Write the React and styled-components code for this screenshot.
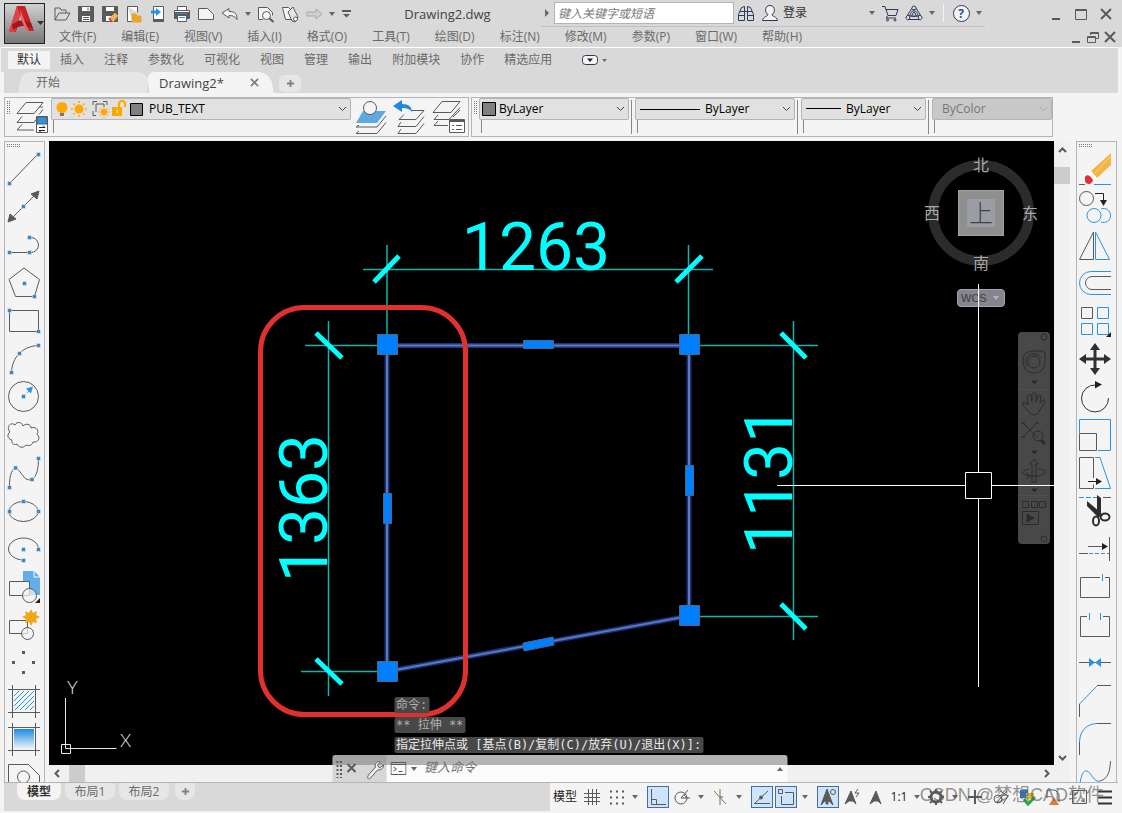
import React, { useState } from 'react';
import styled, { createGlobalStyle, css } from 'styled-components';

const DARK = '#5a5a5a';
const BLUE = '#2b93e3';
const DOT = '#3788c4';

const quickTools = [
  ['打开', <><path d='M2 15V3h5l1 2h5v3' /><path d='M2 15l4-7h11l-4 7z' /></>],
  ['保存', <><path d='M1.500 1.500h15v15h-15z' fill='#5a5a5a' /><path d='M4.500 1.500h9v5h-9zM4.500 10.500h9v6h-9z' fill='#fff' /><path d='M11 2.500v3M6 12.500h6M6 14.500h6' /></>],
  ['另存为', <><path d='M1.500 1.500h15v15h-15z' fill='#5a5a5a' /><path d='M4.500 1.500h9v5h-9zM4.500 10.500h6v6h-6z' fill='#fff' /><path d='M8 14l6-6 3 3-5 6z' fill='#f0b25a' stroke='#e8a040' /><path d='M8 13l3 4' stroke='#d84040' strokeWidth='2' /></>],
  ['从设备打开', <><path d='M2.500 1.500h10v6M2.500 1.500v15h5' fill='#fff' /><path d='M7 17v-8h4l1 2h4v6z' fill='#eba52c' stroke='#eba52c' /></>],
  ['保存到设备', <><path d='M4.500 1.500h10v15h-10z' fill='#fff' /><path d='M4.500 14.500h10v2h-10z' fill='#5a5a5a' /><path d='M2 5.500h5V3l5 4-5 4V8.500H2z' fill={BLUE} stroke='none' /></>],
  ['打印', <><path d='M4.500 5V1.500h9V5M1.500 5.500h15v8h-15z' fill='#fff' /><path d='M1.500 7.500h15v5h-15z' fill='#5a5a5a' /><path d='M4.500 10.500h9v6h-9z' fill='#fff' /><path d='M6 12.500h6M4 8.500h10' stroke={BLUE} /></>],
  ['新建', <path d='M1.500 3.500h9l6 6v5h-15z' fill='#f4f4f4' />],
  ['放弃', <path d='M1 8l7-4.500v3c6 0 8 2 8 8-2-3-4-4-8-4v2.500z' fill='#f4f4f4' />],
  ['', null],
  ['预览', <><path d='M6 14.500H1.500v-12h9l5 5v3' fill='#f4f4f4' /><circle cx='9.500' cy='10.500' r='4' fill='#f4f4f4' /><path d='M12.500 13.500l4 3.500' strokeWidth='2' /></>],
  ['发布', <><path d='M1.500 2.500h6l4 4v8h-7z' fill='#f4f4f4' /><path d='M7 7l5-5 5 10-3 5-3-1z' fill='#e4e4e4' /><circle cx='14.500' cy='14' r='2' fill='#fff' /></>],
  ['重做', <path d='M17 9l-6-5v3H2v4h9v3z' fill='#d0d0d0' stroke='#a8a8a8' />],
  ['', null],
];

const menus = ['文件(F)', '编辑(E)', '视图(V)', '插入(I)', '格式(O)', '工具(T)', '绘图(D)', '标注(N)', '修改(M)', '参数(P)', '窗口(W)', '帮助(H)'];
const ribbonTabs = ['默认', '插入', '注释', '参数化', '可视化', '视图', '管理', '输出', '附加模块', '协作', '精选应用'];

const dots = (...points) => points.map(([x, y]) => (
  <rect key={`${x}-${y}`} x={x - 2} y={y - 2} width='4' height='4' fill={DOT} stroke='#f4f4f4' strokeWidth='.500' />
));

const drawTools = [
  ['直线', <><path d='M5 33L33 4' />{dots([4.5, 33.5], [33.5, 4.5])}</>],
  ['构造线', <><path d='M5 32L32 5' /><path d='M3 34l2-8 6 5zM34 3l-2 8-6-5z' fill={DARK} />{dots([18.5, 18.5])}</>],
  ['多段线', <><path d='M5 26.500h19M24 11.500h2a7.500 7.500 0 0 1 0 15h-2' />{dots([4.5, 26.5], [24.5, 26.5], [24.5, 11.5])}</>],
  ['多边形', <><path d='M19 4l15.500 11.500L29.500 32.500h-19L4 15.500z' />{dots([19.5, 19.5], [29.5, 32.5])}</>],
  ['矩形', <><path d='M4.500 8.500h29v21h-29z' />{dots([4.5, 8.5], [33.5, 29.5])}</>],
  ['圆弧', <><path d='M6.500 32.500C7 17 18 6 33.500 5.500' />{dots([6.5, 32.5], [14.5, 13.5], [33.5, 5.5])}</>],
  ['圆', <><circle cx='18.500' cy='18.500' r='15' /><path d='M18 19l8-8' stroke={BLUE} strokeDasharray='4 2' /><path d='M28 8.500l-2 7-5-5z' fill={BLUE} stroke='none' />{dots([18.5, 18.5])}</>],
  ['修订云线', <path d='M5 16c-4-4 0-11 5-7 2-4 7-3 8 1 3-3 8-2 8 2 4-2 9 2 6 6 4 4 1 9-4 8-1 4-5 4-7 3-3 4-8 2-9-1-4 2-6-2-5-4-5-1-5-6-2-8z' />],
  ['样条曲线', <><path d='M4.500 33.500C4 20 8 14 10.500 14.500c6 1 8 14 16 11C32 23 33.500 14 33.500 4' />{dots([4.5, 33.5], [10.5, 14], [27, 25.5], [33.5, 4.5])}</>],
  ['椭圆', <><ellipse cx='18.500' cy='19.500' rx='14.500' ry='10' />{dots([4.5, 19.5], [33.5, 19.5], [18.5, 9.5])}</>],
  ['椭圆弧', <><path d='M33.500 19c0-6-7-11-15-11s-15 5-15 11 7 11 15 11' />{dots([18.5, 19.5], [33.5, 19.5], [18.5, 30.5])}</>],
  ['插入块', <><path d='M18 3h11l6 6v18H18z' fill='#63aee8' stroke='none' /><path d='M29 3v6h6' stroke='#fff' /><path d='M4.500 13.500h20v14h-20z' fill='#f4f4f4' /><circle cx='24.500' cy='27.500' r='7' fill='#f4f4f4' fillOpacity='.7' /><path d='M35 30v5h-5z' fill='#222' stroke='none' /></>],
  ['创建块', <><path d='M4.500 14.500h18v13h-18z' /><circle cx='22.500' cy='27.500' r='6' fill='#f4f4f4' fillOpacity='.7' /><path d='M26 3l2 4 4-2-1 4 4 2-4 2 1 4-4-1-2 4-2-4-4 1 1-4-4-2 4-2-1-4 4 2z' fill='#f2a516' stroke='none' /></>],
  ['点', <path d='M17 7h3v3h-3zM7 17h3v3H7zM27 17h3v3h-3zM17 27h3v3h-3z' fill={DARK} stroke='none' />],
  ['图案填充', <><path d='M7.500 3v33M30.500 3v33M3 7.500h32M3 30.500h32' /><path d='M9 14l5-5M9 19L19 9M9 24L24 9M10 28L29 9M15 28l14-14M20 28l9-9M25 28l4-4' stroke={BLUE} /></>],
  ['渐变色', <><defs><linearGradient id='fade' x2='0' y2='1'><stop stopColor='#1b8be4' /><stop offset='1' stopColor='#f4f4f4' /></linearGradient></defs><path d='M9 9h20v20H9z' fill='url(#fade)' stroke='none' /><path d='M7.500 3v33M30.500 3v33M3 7.500h32M3 30.500h32' /></>],
  ['面域', <><path d='M3.500 34V6.500h20l11 11V34' /><circle cx='18.500' cy='19' r='6' /></>],
];

const modifyTools = [
  ['删除', <><path d='M34 3v12L20 28l-6-7z' fill='#f5b544' stroke='none' /><path d='M34 6L17 24' stroke='#fbd383' /><path d='M14 21l6 7-4 3-6-5z' fill='#fff' stroke='none' /><path d='M8 27c2-3 5-2 8 3-1 5-7 5-8 1z' fill='#e22f2f' stroke='none' /><path d='M2 34.500h6' /><path d='M17 34.500h17' stroke={BLUE} /></>],
  ['复制', <><circle cx='9.500' cy='10.500' r='7' /><path d='M18 5.500h8.500V12' stroke='#222' /><path d='M23 12h7l-3.500 6z' fill='#222' stroke='none' /><circle cx='17' cy='27.500' r='7' stroke={BLUE} /><path d='M24 21a7 7 0 1 1 0 13' stroke={BLUE} /></>],
  ['镜像', <><path d='M16.500 6v27.500h-14z' /><path d='M18.500 6v27.500h14z' stroke={BLUE} /></>],
  ['偏移', <><path d='M34 7.500H14a11.500 11.500 0 0 0 0 23h20' stroke={BLUE} /><path d='M34 12.500H15a6.500 6.500 0 0 0 0 13h19' /></>],
  ['阵列', <><path d='M4.500 5.500h11v11h-11z' /><path d='M20.500 5.500h11v11h-11zM4.500 21.500h11v11h-11zM20.500 21.500h11v11h-11z' stroke={BLUE} /><path d='M34 30v5h-5z' fill='#222' stroke='none' /></>],
  ['移动', <path d='M18 3l5 7h-3.500v7.500H27V14l7 5-7 5v-3.500h-7.500V28H23l-5 7-5-7h3.500v-7.500H9V24l-7-5 7-5v3.500h7.500V10H13z' fill='#303030' stroke='none' />],
  ['旋转', <><path d='M19 7A13.500 13.500 0 1 0 31.500 20' stroke='#333' /><path d='M18 3l7 3.500-7 4z' fill='#222' stroke='none' /></>],
  ['缩放', <><path d='M2.500 17V3.500h31v31H21' stroke={BLUE} /><path d='M2.500 17.500h17v17h-17z' /></>],
  ['拉伸', <><path d='M16.500 24V3.500h-14v31h14v-4' /><path d='M18 3.500h5l10.500 31H18' stroke={BLUE} /><path d='M11 27.500h9' stroke='#222' /><path d='M19 24l6 3.500-6 3.500z' fill='#222' stroke='none' /></>],
  ['修剪', <><path d='M2 5.500h18' stroke={BLUE} strokeDasharray='5 2' /><path d='M26 5.500h8' /><path d='M20 3l4 3v15h-4zM10 9l13 11 3 4-5 1L10 14z' fill='#2c2c2c' stroke='none' /><ellipse cx='19' cy='29' rx='3' ry='4.500' stroke='#2c2c2c' strokeWidth='2' /><ellipse cx='28' cy='25' rx='4.500' ry='3.500' stroke='#2c2c2c' strokeWidth='2' /></>],
  ['延伸', <><path d='M11 16.500h15M32.500 7v24M2 23.500h9' /><path d='M25 13l6 3.500-6 3.500z' fill='#222' stroke='none' /><path d='M12 23.500h20' stroke={BLUE} strokeDasharray='4 2' /></>],
  ['打断于点', <><path d='M23 9.500H3.500v20h29v-20H28' /><path d='M25.500 6v7' stroke={BLUE} /></>],
  ['打断', <><path d='M10 10.500H3.500v20h29v-20H26' /><path d='M12.500 7v7M23.500 7v7' stroke={BLUE} /></>],
  ['合并', <><path d='M2 18.500h32' /><path d='M12 14v9l6-4.500zM24 14v9l-6-4.500z' fill={BLUE} stroke='none' /></>],
  ['倒角', <><path d='M2.500 22L20 4' stroke={BLUE} /><path d='M20 3.500h14M2.500 22v13' /></>],
  ['圆角', <><path d='M2.500 22C3 10 10 4 20 3.500' stroke={BLUE} /><path d='M20 3.500h14M2.500 22v13' /></>],
  ['光顺曲线', <><path d='M3 26c1-8 3-14 7-13s7 12 13 10' stroke={BLUE} /><path d='M23 23c8-2 10-10 10.500-20' /></>],
];

const compass = [['北', 'n'], ['西', 'w'], ['东', 'e'], ['南', 's']];

function Tools({ label, side, tools }) {
  return (
    <ToolBar aria-label={label} $side={side}>
      <Grip $wide />
      {tools.map(([name, art]) => (
        <ToolButton key={name} type='button' aria-label={name}>
          <Line width='38' height='38' viewBox='0 0 38 38'>{art}</Line>
        </ToolButton>
      ))}
    </ToolBar>
  );
}

function Caret({ label }) {
  return (
    <CaretButton type='button' aria-label={label || '更多'}>
      <Solid width='6' height='4' viewBox='0 0 6 4'><path d='M0 0h6L3 4z' /></Solid>
    </CaretButton>
  );
}

function Combo({ label, value, pad, width, grow, disabled, children }) {
  return (
    <ComboCell $width={width} $grow={grow}>
      <ComboBox>
        <ComboSelect aria-label={label} defaultValue={value} $pad={pad} disabled={disabled}>
          <option>{value}</option>
        </ComboSelect>
        <ComboArt>{children}</ComboArt>
        <ComboChevron width='9' height='6' viewBox='0 0 9 6' $off={disabled}><path d='M1 1l3.500 3.500L8 1' /></ComboChevron>
      </ComboBox>
      <ComboTail />
    </ComboCell>
  );
}

function Chevron({ d, label }) {
  return (
    <ScrollButton type='button' aria-label={label}>
      <Line width='9' height='9' viewBox='0 0 9 9' $bold><path d={d} /></Line>
    </ScrollButton>
  );
}

function StatusIcon({ label, on, wide, children }) {
  return (
    <StatusButton type='button' aria-label={label} $on={on} $wide={wide}>
      <Line width='18' height='18' viewBox='0 0 18 18'>{children}</Line>
    </StatusButton>
  );
}

function Drawing() {
  return (
    <DrawingSvg aria-label='图形'>
      <g stroke='#12b5ac' strokeWidth='1.500'>
        <path d='M314 128.500h350M338 104v100M639.500 104v100' />
        <path d='M279.500 180v375M256 204.500h74M252 530.500h76' />
        <path d='M744.500 180v319M650 204.500h119M650 475.500h119' />
      </g>
      <path d='M325 141l25-26M627 141l26-26M267 192l26 25M267 518l26 25M732 192l25 25M732 463l25 25' stroke='#00ffff' strokeWidth='5' />
      <DimText x='487' y='129'>1263</DimText>
      <DimText transform='translate(278 367) rotate(-90)'>1363</DimText>
      <DimText transform='translate(743 339) rotate(-90)'>1131</DimText>
      <path d='M338 204.500h302V475L338 530.500z' stroke='#18347f' strokeWidth='5' />
      <path d='M338 204.500h302V475L338 530.500z' stroke='#5f78b8' strokeWidth='2' />
      <g fill='#0080ff' stroke='#456a8c'>
        <path d='M328.500 193.500h20v20h-20zM630.500 193.500h20v20h-20zM630.500 464.500h20v20h-20zM328.500 520.500h20v20h-20z' />
        <path d='M474.500 199.500h30v8h-30zM334.500 352.500h8v30h-8zM636.500 324.500h8v30h-8z' />
        <path d='M474 502l30-6 1 8-30 6z' />
      </g>
      <rect x='211.500' y='166.500' width='205' height='407' rx='44' stroke='#e03030' strokeWidth='5' />
      <path d='M12.500 612.500h9v-9h-9zM16.500 557v50.500h51' stroke='#e8e8e8' />
      <AxisText x='18' y='553'>Y</AxisText>
      <AxisText x='71' y='606'>X</AxisText>
      <path d='M728 344.500h188M943 344.500h62M929.500 143v188M929.500 358v188M916.500 331.500h26v26h-26z' stroke='#fff' />
    </DrawingSvg>
  );
}

export default function App() {
  const [command, setCommand] = useState('');
  const [search, setSearch] = useState('');

  return (
    <Page>
      <GlobalStyle />
      <Header>
        <AppButton type='button' aria-label='应用程序菜单'>
          <svg width='38' height='38' viewBox='0 0 38 38'>
            <path d='M11 2h8l9 25h-7L14 11l-4 17H3z' fill='#c9202a' />
            <path d='M11 2l3 9-5 17H3z' fill='#df4246' />
            <path d='M6 21c6-6 13-6 19-2l2 6c-7-4-13-4-20 1z' fill='#a3141d' />
            <path d='M14 5l5 13 4 9h-3l-5-12z' fill='#e66a68' />
            <path d='M31 17h7l-3.500 4z' fill='#333' />
          </svg>
        </AppButton>
        <HeaderRows>
          <TitleRow>
            {quickTools.map(([name, art], i) => (art
              ? <QuickButton key={i} type='button' aria-label={name}><Line width='18' height='18' viewBox='0 0 18 18'>{art}</Line></QuickButton>
              : <Caret key={i} />
            ))}
            <QuickMore type='button' aria-label='自定义快速访问工具栏'>
              <Line width='9' height='8' viewBox='0 0 9 8'><path d='M0 1h9' strokeWidth='2' /><path d='M1 4h7L4.500 7.500z' fill={DARK} stroke='none' /></Line>
            </QuickMore>
            <Title>Drawing2.dwg</Title>
            <InfoCenter>
              <Solid width='4' height='8' viewBox='0 0 4 8'><path d='M0 0v8l4-4z' /></Solid>
              <SearchInput aria-label='搜索' placeholder='键入关键字或短语' value={search} onChange={(e) => setSearch(e.target.value)} />
              <QuickButton type='button' aria-label='查找'>
                <Line width='18' height='18' viewBox='0 0 18 18' $ink><path d='M1.500 16.500v-6l3-7 3-1v14zM10.500 16.500v-14l3 1 3 7v6zM8 7.500h2M1.500 11.500h6M10.500 11.500h6M3 7.500h4M11 7.500h4' /></Line>
              </QuickButton>
              <LoginButton type='button'>
                <Line width='18' height='18' viewBox='0 0 18 18' $ink><path d='M9 1.500c6 0 5 8 2 9 0 2 5 2 5.500 6h-15C2 12.500 7 12.500 7 10.500c-3-1-4-9 2-9z' fill='#f4f4f4' /></Line>
                登录
              </LoginButton>
              <Caret />
              <QuickButton type='button' aria-label='购物车'>
                <Line width='18' height='18' viewBox='0 0 18 18' $ink><path d='M1 2.500h3l3 9h8l2-6H5M7 11.500l-2 2.500h10' /><circle cx='6.500' cy='16' r='1' /><circle cx='14' cy='16' r='1' /></Line>
              </QuickButton>
              <QuickButton type='button' aria-label='应用商店'>
                <Line width='18' height='18' viewBox='0 0 18 18' $ink><path d='M7 4a2 2 0 1 1 4 0l5 8a2 2 0 0 1-2 3.500H4A2 2 0 0 1 2 12z' /><path d='M9 7.500l2.500 4.500h-5z' /><path d='M6.500 5c4 1 7 4 7 10M11.500 5c-4 1-7 4-7 10M2.500 11c4 2 9 2 13 0' /></Line>
              </QuickButton>
              <Caret />
              <Divider />
              <HelpButton type='button' aria-label='帮助'>
                <span>?</span>
              </HelpButton>
              <Caret />
            </InfoCenter>
            <WindowButtons>
              <WindowButton type='button' aria-label='最小化'><Line width='14' height='14' viewBox='0 0 14 14' $bold><path d='M3 12h8' /></Line></WindowButton>
              <WindowButton type='button' aria-label='最大化'><Line width='14' height='14' viewBox='0 0 14 14'><path d='M1.500 2.500h11v10h-11zM1.500 3.500h11' /></Line></WindowButton>
              <WindowButton type='button' aria-label='关闭'><Line width='14' height='14' viewBox='0 0 14 14' $bold><path d='M2 2l10 10M12 2L2 12' /></Line></WindowButton>
            </WindowButtons>
          </TitleRow>
          <MenuRow>
            {menus.map((item) => <MenuItem key={item} type='button'>{item}</MenuItem>)}
            <WindowButtons $tight>
              <WindowButton type='button' aria-label='最小化图形' $small><Line width='14' height='14' viewBox='0 0 14 14' $bold><path d='M3 12h8' /></Line></WindowButton>
              <WindowButton type='button' aria-label='还原图形' $small><Line width='14' height='14' viewBox='0 0 14 14'><path d='M4.500 5V2.500h8v6H10M1.500 6.500h8v6h-8zM4 3.500h8M1 7.500h8' /></Line></WindowButton>
              <WindowButton type='button' aria-label='关闭图形' $small><Line width='14' height='14' viewBox='0 0 14 14' $bold><path d='M2 2l10 10M12 2L2 12' /></Line></WindowButton>
            </WindowButtons>
          </MenuRow>
        </HeaderRows>
      </Header>

      <RibbonRow>
        {ribbonTabs.map((tab, i) => <RibbonTab key={tab} type='button' $active={i === 0}>{tab}</RibbonTab>)}
        <RibbonToggle type='button' aria-label='最小化功能区'>
          <Line width='16' height='10' viewBox='0 0 16 10' $ink><rect x='.500' y='.500' width='15' height='9' rx='3' fill='#f4f4f4' /><path d='M5 3.500h6L8 7z' fill='#222' stroke='none' /></Line>
          <Solid width='5' height='3' viewBox='0 0 6 4'><path d='M0 0h6L3 4z' /></Solid>
        </RibbonToggle>
      </RibbonRow>

      <FileTabs>
        <FileTab type='button' $width={128}>开始</FileTab>
        <FileTab type='button' $width={124} $active>Drawing2* <Line width='9' height='9' viewBox='0 0 10 10' $bold $soft><path d='M1 1l8 8M9 1L1 9' /></Line></FileTab>
        <NewTab type='button' aria-label='新建图形'><Line width='9' height='9' viewBox='0 0 10 10' $bold $soft><path d='M5 1v8M1 5h8' /></Line></NewTab>
      </FileTabs>

      <Toolbars>
        <Panel $width={465}>
          <Grip />
          <LayerButton type='button' aria-label='图层特性'>
            <Line width='34' height='36' viewBox='0 0 34 36'>
              <path d='M11 3.500h17l-9 11H2zM7 17.500l-5 6h17l2-3M28 10.500l-4 5M7 25.500l-5 5.500h17M28 8l-4 0' />
              <path d='M21.500 17.500h11v16h-11z' fill='#fff' />
              <path d='M22 18h10v7H22z' fill={BLUE} />
              <path d='M24 28.500h6M28 26.500l2 2M30 31.500h-6l2 2' stroke='#222' />
            </Line>
          </LayerButton>
          <Combo label='图层' value='PUB_TEXT' pad={97} grow>
            <Line width='90' height='20' viewBox='0 0 90 20'>
              <circle cx='9' cy='8.500' r='5.500' fill='#ffa800' stroke='none' />
              <path d='M7 14h4v3H7z' fill='#777' stroke='none' />
              <circle cx='26' cy='10' r='4.500' fill='#ffa800' stroke='none' />
              <path d='M26 2v16M18 10h16M20.500 4.500l11 11M31.500 4.500l-11 11' stroke='#ffa800' strokeDasharray='2 12' strokeWidth='1.500' />
              <path d='M40 6V2.500h4M50 2.500h4V6M40 12v4.500h3' /><path d='M43 13V5h8v3' />
              <circle cx='51' cy='13' r='3' fill='#ffa800' stroke='none' /><path d='M51 7.500v11M45.500 13h11M47 9l8 8M55 9l-8 8' stroke='#ffa800' />
              <path d='M59 8h10v9H59z' fill='#ffa800' stroke='none' /><path d='M66 8V5a3 3 0 0 1 6 0v3' stroke='#ffa800' strokeWidth='2' /><path d='M64 11v3' stroke='#fff' />
              <path d='M77.500 4.500h12v12h-12z' fill='#808080' stroke='#000' />
            </Line>
          </Combo>
          <LayerButton type='button' aria-label='置为当前图层'>
            <Line width='34' height='36' viewBox='0 0 34 36'>
              <path d='M9 12h23l-9 12H2z' fill='#5fa9e3' stroke='none' />
              <circle cx='16' cy='9' r='6.500' fill='#f4f4f4' /><path d='M5 26.500h-1L2 28h21l9-11M5 32l-3 2.500h21l9-11' />
            </Line>
          </LayerButton>
          <LayerButton type='button' aria-label='上一个图层'>
            <Line width='34' height='36' viewBox='0 0 34 36'>
              <path d='M18 11.500h13l-8 9H6l5-5M8 23l-3 4.500h18l8-10M8 30l-3 4.500h18l8-10' />
              <path d='M0 7l9-6v4c7 0 10 3 10 8-2-3-5-4-10-4v4z' fill='#2088dc' stroke='none' />
            </Line>
          </LayerButton>
          <LayerButton type='button' aria-label='图层状态'>
            <Line width='34' height='36' viewBox='0 0 34 36'>
              <path d='M10 2.500h18l-9 11H1zM6 16l-4 4.500h15l11-12M6 22l-4 4.500h14M21 18l7-7' />
              <path d='M17.500 20.500h15v13h-15z' fill='#fff' /><path d='M18 22h14' strokeWidth='2' /><path d='M20 26.500h2M24 26.500h6M20 30.500h2M24 30.500h6' />
            </Line>
          </LayerButton>
        </Panel>
        <Panel>
          <Grip />
          <Combo label='颜色' value='ByLayer' pad={19} width={150}>
            <Line width='20' height='20' viewBox='0 0 20 20'><path d='M1.500 3.500h13v13h-13z' fill='#808080' stroke='#000' /></Line>
          </Combo>
          <Separator />
          <Combo label='线型' value='ByLayer' pad={69} width={160}>
            <Line width='66' height='20' viewBox='0 0 66 20'><path d='M3 10.500h60' stroke='#000' /></Line>
          </Combo>
          <Separator />
          <Combo label='线宽' value='ByLayer' pad={44} width={125}>
            <Line width='42' height='20' viewBox='0 0 42 20'><path d='M3 9.500h35' stroke='#000' /></Line>
          </Combo>
          <Separator />
          <Combo label='打印样式' value='ByColor' pad={9} width={120} disabled />
        </Panel>
      </Toolbars>

      <Workspace>
        <Tools label='绘图' side='left' tools={drawTools} />
        <Viewport>
          <Canvas>
            <ViewCube>
              {compass.map(([name, dir]) => <CompassPoint key={dir} $dir={dir}>{name}</CompassPoint>)}
              <CubeFace type='button'><span>上</span></CubeFace>
            </ViewCube>
            <WcsButton type='button'>WCS <Solid width='8' height='4' viewBox='0 0 6 4' $pale><path d='M0 0h6L3 4z' /></Solid></WcsButton>
            <NavBar width='32' height='212' viewBox='0 0 32 212' aria-label='导航栏'>
              <circle cx='26' cy='5' r='3' /><circle cx='26' cy='207' r='3' />
              <path d='M5 28c0-6 4-9 11-9h7c3 0 4 1 4 4v7c0 7-5 11-11 11S5 37 5 28z' /><circle cx='16' cy='30' r='6' /><path d='M9 35c-5-12 8-18 14-9' />
              <path d='M10 79l-5-6c-1-3 2-3 5 0l-1-9c1-2 3-2 4 0l1 6v-8c1-2 3-2 4 0v8l2-6c1-2 3-1 3 0l-1 7 3-3c2-1 2 1 1 3l-5 9c-2 4-8 4-11-1z' />
              <path d='M5 91l15 15M19 91L5 105M3 91h4M17 91h4M3 105h4' /><circle cx='20' cy='104' r='5' /><path d='M23 108l4 4' strokeWidth='3' />
              <path d='M16 127l4 5h-2v18h-4v-18h-2z' /><path d='M11 137c-8 2-9 6 2 7 8 1 16-2 14-5-1-2-4-2-7-2M8 141l4 3-4 3' />
              <path d='M4.500 169.500h6v6h-6zM13.500 169.500h6v6h-6zM21.500 169.500h6v6h-6zM4.500 179.500h16v13h-16z' /><path d='M9 182l7 4-7 4z' fill='#2b2b2b' />
              <path d='M14 49h5l-2.500 3zM14 119h5l-2.500 3zM14 157h5l-2.500 3z' fill='#2b2b2b' />
              <path d='M1 57.500h30M1 163.500h30' stroke='#505050' />
            </NavBar>
            <Drawing />
          </Canvas>
          <VScroll>
            <Chevron label='向上滚动' d='M1 6l3.500-3.500L8 6' />
            <Thumb />
            <ScrollSpace />
            <Chevron label='向下滚动' d='M1 3l3.500 3.500L8 3' />
          </VScroll>
          <HScroll>
            <Chevron label='向左滚动' d='M6 1L2.500 4.500 6 8' />
            <Thumb />
            <ScrollSpace />
            <Chevron label='向右滚动' d='M3 1l3.500 3.500L3 8' />
          </HScroll>
          <CommandPanel>
            <History>
              <HistoryLine $faint>命令:</HistoryLine>
              <HistoryLine $faint>** 拉伸 **</HistoryLine>
              <HistoryLine>指定拉伸点或 [基点(B)/复制(C)/放弃(U)/退出(X)]:</HistoryLine>
            </History>
            <CommandBar>
              <CommandTools>
                <Line width='54' height='24' viewBox='0 0 54 24'>
                  <path d='M5 4v17M8.500 4v17' strokeWidth='2' strokeDasharray='2 2' />
                  <path d='M15 7l8 8M23 7l-8 8' strokeWidth='2' />
                  <path d='M36 18l7-8c-1-4 2-6 5-5l-3 3 2 3 4-3c0 4-3 5-6 5l-7 8c-2 2-4 0-2-3z' fill='#f0f0f0' />
                </Line>
              </CommandTools>
              <Line width='16' height='13' viewBox='0 0 16 13'><path d='M.500 .500h15v12H.500zM.500 2.500h15M3 5l3 2-3 2M8 9.500h4' /></Line>
              <Solid width='7' height='4' viewBox='0 0 6 4'><path d='M0 0h6L3 4z' /></Solid>
              <CommandInput aria-label='命令行' placeholder='键入命令' value={command} onChange={(e) => setCommand(e.target.value)} />
              <Solid width='7' height='4' viewBox='0 0 6 4'><path d='M0 4h6L3 0z' /></Solid>
            </CommandBar>
          </CommandPanel>
        </Viewport>
        <Tools label='修改' side='right' tools={modifyTools} />
      </Workspace>

      <Footer>
        <LayoutTabs>
          <LayoutTab type='button' $active>模型</LayoutTab>
          <LayoutTab type='button'>布局1</LayoutTab>
          <LayoutTab type='button'>布局2</LayoutTab>
          <LayoutTab type='button' aria-label='新建布局' $slim><Line width='9' height='9' viewBox='0 0 10 10' $bold $soft><path d='M5 1v8M1 5h8' /></Line></LayoutTab>
        </LayoutTabs>
        <StatusBar>
          <StatusText type='button' $width={30}>模型</StatusText>
          <StatusIcon label='栅格'><path d='M5.500 1v16M9.500 1v16M13.500 1v16M1 5.500h16M1 9.500h16M1 13.500h16' /></StatusIcon>
          <StatusIcon label='捕捉'><path d='M3 3.500h14M3 9.500h14M3 15.500h14' strokeWidth='2' strokeDasharray='2 4' /></StatusIcon>
          <Caret />
          <StatusGap />
          <StatusIcon label='正交' on><path d='M2.500 1v15.500H17M2.500 11.500h5v5' /></StatusIcon>
          <StatusIcon label='极轴'><circle cx='8' cy='10' r='6' /><path d='M17 10H8l7-8M11 7c2 1 2 2 2 3' /></StatusIcon>
          <Caret />
          <StatusIcon label='等轴测'><path d='M3 3l12 13' stroke='#d34a4a' /><path d='M9 1v16' stroke='#2f9b4d' /><path d='M9 9h3' /></StatusIcon>
          <Caret />
          <StatusGap />
          <StatusIcon label='对象捕捉追踪' on><path d='M1 15.500h16M2 15L15 3' /><circle cx='8' cy='9.500' r='1.500' fill={DARK} /></StatusIcon>
          <StatusIcon label='对象捕捉' on><path d='M8 4.500h8.500v12h-12V8' /><path d='M1.500 1.500h4v4h-4z' /></StatusIcon>
          <Caret />
          <StatusGap />
          <StatusIcon label='注释可见性' on><path d='M8 1l6 16-4-4-1 0v3H7v-3H6l-4 4z' fill={DARK} stroke={DARK} /><circle cx='14' cy='4' r='2.500' /></StatusIcon>
          <StatusIcon label='自动缩放'><path d='M8 3l5 13-3-3H6l-4 3z' fill={DARK} stroke={DARK} /><path d='M15 1l-3 4h4l-3 4' /></StatusIcon>
          <StatusIcon label='注释比例'><path d='M9 3l5 13-3-3H7l-4 3z' fill={DARK} stroke={DARK} /></StatusIcon>
          <StatusText type='button' $width={22}>1:1</StatusText>
          <Caret />
          <StatusIcon label='工作空间'><circle cx='9' cy='9' r='5' strokeWidth='3' /><path d='M9 1v3M9 14v3M1 9h3M14 9h3M3 3l3 3M12 12l3 3M15 3l-3 3M6 12l-3 3' strokeWidth='2' /></StatusIcon>
          <Caret />
          <StatusIcon label='注释监视器' wide><path d='M9 2v14M2 9h14' strokeWidth='2' /></StatusIcon>
          <StatusIcon label='隔离对象' wide><circle cx='6' cy='11' r='4' /><path d='M8 3l8 5-5 8M4 15L15 3' /></StatusIcon>
          <StatusIcon label='硬件加速' wide><path d='M2 2h8v8H2z' fill='#2b78c8' stroke='none' /><path d='M8 5h8v6H8z' fill='#dfb42f' stroke='none' /><path d='M6 11l4 5 7-7' stroke='#2ca54a' strokeWidth='3' /></StatusIcon>
          <StatusIcon label='通知' wide><path d='M3 10V2h8l4 4v8' /><path d='M10 9l5 8H5z' fill='#e07a3a' stroke='none' /></StatusIcon>
          <StatusIcon label='全屏显示' wide><path d='M2.500 2.500h14v13h-14zM5 8V5h3M14 10v3h-3' /></StatusIcon>
          <StatusIcon label='自定义' wide><path d='M2 3.500h14M2 9.500h14M2 15.500h14' strokeWidth='2' stroke='#333' /></StatusIcon>
          <Watermark>CSDN @梦想CAD软件</Watermark>
        </StatusBar>
      </Footer>
    </Page>
  );
}

const GlobalStyle = createGlobalStyle`
  * {
    box-sizing: border-box;
  }
  body {
    margin: 0;
    background: #f4f4f4;
    font-family: 'Open Sans', 'Noto Sans CJK SC', sans-serif;
    font-size: 12px;
    color: #6a6a6a;
  }
  button, input, select {
    margin: 0;
    border: none;
    padding: 0;
    background: none;
    font: inherit;
    color: inherit;
  }
  svg {
    flex: none;
  }
`
const Page = styled.div`
  display: flex;
  flex-direction: column;
  height: 100vh;
  min-height: 400px;
  padding-bottom: 2px;
  line-height: 16px;
  overflow: hidden;
`
const Line = styled.svg`
  display: block;
  fill: none;
  stroke: ${({ $ink, $soft }) => ($ink ? '#2c3a5a' : $soft ? '#808080' : DARK)};
  stroke-width: ${({ $bold }) => ($bold ? 2 : 1)};
`
const Solid = styled.svg`
  display: block;
  fill: ${({ $pale }) => ($pale ? '#b4b4c0' : '#666')};
`
const Header = styled.header`
  display: flex;
  flex: none;
  height: 47px;
  padding-left: 4px;
  background: #d9d9d9;
`
const AppButton = styled.button`
  width: 41px;
  height: 41px;
  margin-top: 3px;
  border: 1px solid #222;
  background: linear-gradient(#d2d2d2, #777);
`
const HeaderRows = styled.div`
  flex: 1;
  min-width: 0;
  padding-left: 5px;
`
const TitleRow = styled.div`
  display: flex;
  align-items: center;
  height: 27px;
`
const QuickButton = styled.button`
  display: flex;
  align-items: center;
  justify-content: center;
  width: 24px;
  height: 24px;
`
const QuickMore = styled(QuickButton)`
  width: 16px;
`
const CaretButton = styled(QuickButton)`
  width: 12px;
`
const Title = styled.h1`
  flex: 1;
  margin: 0;
  font-size: 13px;
  font-weight: 400;
  text-align: center;
  color: #444;
`
const InfoCenter = styled.div`
  display: flex;
  align-items: center;
  height: 26px;
  padding-left: 4px;
  border-bottom: 1px solid #c0c0c0;
`
const SearchInput = styled.input`
  width: 180px;
  height: 22px;
  margin-left: 5px;
  border: 1px solid #b4b4b4;
  padding: 0 3px;
  background: #fff;
  font-style: italic;

  &::placeholder {
    color: #777;
  }
`
const LoginButton = styled.button`
  display: flex;
  align-items: center;
  gap: 4px;
  width: 108px;
  padding-left: 3px;
  color: #333;
`
const Divider = styled.div`
  width: 1px;
  height: 18px;
  margin: 0 5px;
  background: #f4f4f4;
`
const HelpButton = styled(QuickButton)`
  span {
    width: 17px;
    height: 17px;
    border: 1px solid #2c3a5a;
    border-radius: 50%;
    background: #f4f4f4;
    font-weight: 700;
    line-height: 15px;
    color: #1f4e96;
  }
`
const WindowButtons = styled.div`
  display: flex;
  gap: ${({ $tight }) => ($tight ? 0 : 4)}px;
  margin-left: ${({ $tight }) => ($tight ? 'auto' : '60px')};
  padding-right: ${({ $tight }) => ($tight ? 4 : 6)}px;
`
const WindowButton = styled(QuickButton)`
  width: ${({ $small }) => ($small ? 17 : 21)}px;
  height: 20px;
`
const MenuRow = styled.nav`
  display: flex;
  align-items: center;
  gap: 25px;
  height: 20px;
  padding-left: 9px;
`
const MenuItem = styled.button`
  white-space: nowrap;
`
const RibbonRow = styled.nav`
  display: flex;
  align-items: center;
  flex: none;
  height: 25px;
  margin: 0 4px 0 1px;
  border-top: 1px solid #fff;
  padding-left: 7px;
  background: #d9d9d9;
`
const RibbonTab = styled.button`
  height: 18px;
  padding: 0 10px;
  line-height: 18px;
  ${({ $active }) => $active && css`
    padding: 0 9px;
    background: #f4f4f4;
    color: #333;
  `}
`
const RibbonToggle = styled.button`
  display: flex;
  align-items: center;
  gap: 4px;
  margin-left: 20px;
`
const FileTabs = styled.nav`
  display: flex;
  flex: none;
  height: 21px;
  margin: 0 4px;
  padding-left: 16px;
  background: #d9d9d9;
`
const FileTab = styled.button`
  position: relative;
  display: flex;
  align-items: center;
  justify-content: space-between;
  width: ${({ $width }) => $width}px;
  padding: 0 16px;
  isolation: isolate;
  ${({ $active }) => $active && css`
    padding: 0 13px 0 11px;
    font-size: 13px;
    color: #444;
  `}

  &::before {
    content: '';
    position: absolute;
    inset: 0;
    z-index: -1;
    border-radius: 8px 12px 0 0;
    background: ${({ $active }) => ($active ? '#f4f4f4' : '#e6e6e6')};
    transform: skewX(${({ $active }) => ($active ? 8 : -10)}deg);
  }
`
const NewTab = styled.button`
  display: flex;
  align-items: center;
  justify-content: center;
  width: 22px;
  height: 17px;
  margin: 3px 0 0 7px;
  border-radius: 5px;
  background: #e6e6e6;
`
const Toolbars = styled.div`
  display: flex;
  flex: none;
  gap: 2px;
  height: 48px;
  padding: 4px;
`
const Panel = styled.div`
  display: flex;
  width: ${({ $width }) => ($width ? `${$width}px` : 'auto')};
  border: 1px solid #b4b4b4;
  padding-left: 2px;
`
const Grip = styled.div`
  flex: none;
  width: ${({ $wide }) => ($wide ? 14 : 4)}px;
  height: ${({ $wide }) => ($wide ? 4 : 14)}px;
  margin: ${({ $wide }) => ($wide ? '2px 0 2px 2px' : '3px 1px 0 0')};
  background: conic-gradient(from 270deg at 1px 1px, #777 90deg, transparent 0) 0 0 / 2px 2px;
`
const LayerButton = styled.button`
  display: flex;
  align-items: center;
  justify-content: center;
  flex: none;
  width: 39px;
  height: 38px;
`
const ComboCell = styled.div`
  flex: ${({ $grow }) => ($grow ? 1 : 'none')};
  width: ${({ $width }) => $width}px;
`
const ComboBox = styled.div`
  position: relative;
  height: 22px;
`
const ComboSelect = styled.select`
  width: 100%;
  height: 22px;
  border: 1px solid #b4b4b4;
  border-radius: 2px;
  padding-left: ${({ $pad }) => $pad}px;
  background: #e1e1e1;
  appearance: none;
  color: #000;

  &:disabled {
    background: #c8c8c8;
    opacity: 1;
    color: #777;
  }
`
const ComboArt = styled.div`
  position: absolute;
  top: 1px;
  left: 2px;
  pointer-events: none;
`
const ComboChevron = styled.svg`
  position: absolute;
  top: 8px;
  right: 4px;
  fill: none;
  stroke: ${({ $off }) => ($off ? '#aaa' : '#444')};
  pointer-events: none;
`
const ComboTail = styled.div`
  height: 13px;
  margin-left: 2px;
  border-left: 1px solid #888;
`
const Separator = styled.div`
  width: 1px;
  height: 34px;
  margin: 2px 3px 0 2px;
  background: #888;
`
const Workspace = styled.main`
  display: flex;
  flex: 1;
  min-height: 0;
  padding: 0 5px 0 4px;
`
const ToolBar = styled.div`
  flex: none;
  width: 41px;
  margin: ${({ $side }) => ($side === 'left' ? '0 4px 0 0' : '0 0 0 6px')};
  border: 1px solid #b4b4b4;
  border-bottom: none;
  overflow: hidden;
`
const ToolButton = styled.button`
  display: block;
  height: 38px;
`
const Viewport = styled.section`
  position: relative;
  display: grid;
  flex: 1;
  grid-template: 1fr 17px / 1fr 16px;
  min-width: 0;
  background: #f0f0f0;
`
const Canvas = styled.div`
  position: relative;
  overflow: hidden;
  background: #000;
`
const DrawingSvg = styled.svg`
  position: absolute;
  inset: 0;
  width: 100%;
  height: 100%;
  fill: none;
  pointer-events: none;
`
const DimText = styled.text`
  fill: #00ffff;
  font-family: Roboto, 'Liberation Sans', sans-serif;
  font-size: 66px;
  text-anchor: middle;
`
const AxisText = styled.text`
  fill: #e8e8e8;
  font-family: Lato, sans-serif;
  font-size: 18px;
  font-weight: 300;
`
const ViewCube = styled.div`
  position: absolute;
  top: 19px;
  right: 20px;
  display: flex;
  align-items: center;
  justify-content: center;
  width: 106px;
  height: 106px;
  border: 10px solid #2b2b2b;
  border-radius: 50%;
`
const CompassPoint = styled.span`
  position: absolute;
  font-size: 16px;
  line-height: 18px;
  color: #a8a8a8;
  ${({ $dir }) => ({
    n: 'top: -14px;',
    s: 'bottom: -16px;',
    w: 'left: -14px;',
    e: 'right: -14px;',
  })[$dir]}
`
const CubeFace = styled.button`
  width: 46px;
  height: 46px;
  border: 1px solid #a0a0a0;
  background: #8f8f8f;

  span {
    display: block;
    margin: 0 8px;
    background: #9a9ea4;
    font-size: 24px;
    font-weight: 300;
    line-height: 28px;
    color: #3c414a;
  }
`
const WcsButton = styled.button`
  position: absolute;
  top: 148px;
  right: 49px;
  display: flex;
  align-items: center;
  justify-content: space-between;
  width: 48px;
  height: 18px;
  border: 1px solid #a4a4b0;
  border-radius: 4px;
  padding: 0 4px 0 3px;
  background: #85858f;
  font-family: 'Liberation Sans', sans-serif;
  font-size: 11px;
  line-height: 14px;
  color: #3a3a40;
`
const NavBar = styled.svg`
  position: absolute;
  top: 191px;
  right: 4px;
  border-radius: 4px;
  background: #484848;
  fill: none;
  stroke: #2b2b2b;
`
const VScroll = styled.div`
  display: flex;
  flex-direction: column;
  padding-top: 1px;
`
const HScroll = styled.div`
  display: flex;
  grid-column: 1;
`
const ScrollButton = styled.button`
  display: flex;
  align-items: center;
  justify-content: center;
  flex: none;
  width: 16px;
  height: 16px;

  ${HScroll} &:first-child {
    margin-right: 4px;
  }
  ${VScroll} &:first-child {
    margin-bottom: 9px;
  }
`
const Thumb = styled.div`
  flex: none;
  width: 16px;
  height: 17px;
  background: #cdcdcd;
`
const ScrollSpace = styled.div`
  flex: 1;
`
const CommandPanel = styled.div`
  position: absolute;
  bottom: 0;
  left: 50%;
  width: 455px;
  max-width: 100%;
  transform: translateX(-50%);
`
const History = styled.div`
  display: flex;
  flex-direction: column;
  align-items: flex-start;
  gap: 4px;
  padding: 0 0 2px 62px;
`
const HistoryLine = styled.div`
  border-radius: 2px;
  padding: 0 2px;
  background: #484848;
  font-family: 'DejaVu Sans Mono', 'Noto Sans CJK SC', monospace;
  white-space: nowrap;
  color: ${({ $faint }) => ($faint ? '#b0b0b0' : '#e8e8e8')};
`
const CommandBar = styled.div`
  display: flex;
  align-items: center;
  gap: 4px;
  height: 27px;
  border-radius: 3px 3px 0 0;
  padding-right: 4px;
  background: rgba(255, 255, 255, 0.7);
`
const CommandTools = styled.div`
  display: flex;
  align-items: center;
  height: 27px;
  background: rgba(130, 130, 130, 0.3);
`
const CommandInput = styled.input`
  flex: 1;
  min-width: 0;
  padding: 0 0 3px 3px;
  outline: none;
  font-size: 13px;
  font-style: italic;

  &::placeholder {
    color: #707070;
  }
`
const Footer = styled.footer`
  position: relative;
  display: flex;
  flex: none;
  height: 29px;
  margin: 0 4px;
  border-top: 1px solid #b4b4b4;
  background: #d9d9d9;
`
const LayoutTabs = styled.nav`
  display: flex;
  flex: 1;
  gap: 4px;
  padding-left: 13px;
`
const LayoutTab = styled.button`
  display: flex;
  align-items: center;
  justify-content: center;
  width: ${({ $slim, $active }) => ($slim ? 20 : $active ? 44 : 50)}px;
  height: 17px;
  border-radius: 2px 2px 8px 8px;
  background: #e6e6e6;
  ${({ $active }) => $active && css`
    background: #f4f4f4;
    font-weight: 700;
    color: #333;
  `}
  ${({ $slim }) => $slim && css`
    margin-left: 2px;
  `}
`
const StatusBar = styled.div`
  position: relative;
  display: flex;
  align-items: center;
  flex: none;
  background: #f4f4f4;

  ${CaretButton} {
    width: 14px;
  }
`
const StatusText = styled.button`
  width: ${({ $width }) => $width}px;
  color: #222;
`
const StatusGap = styled.div`
  width: 4px;
`
const StatusButton = styled.button`
  display: flex;
  align-items: center;
  justify-content: center;
  width: ${({ $wide }) => ($wide ? 26 : 24)}px;
  height: 24px;
  ${({ $on }) => $on && css`
    width: 22px;
    height: 22px;
    margin: 0 1px;
    border: 1px solid #3f6ea8;
    background: #cde4fa;
  `}
`
const Watermark = styled.span`
  position: absolute;
  right: 14px;
  bottom: 5px;
  font-family: 'Liberation Sans', 'Noto Sans CJK SC', sans-serif;
  font-size: 18px;
  line-height: 22px;
  white-space: nowrap;
  color: rgba(90, 90, 90, 0.65);
  pointer-events: none;
`
